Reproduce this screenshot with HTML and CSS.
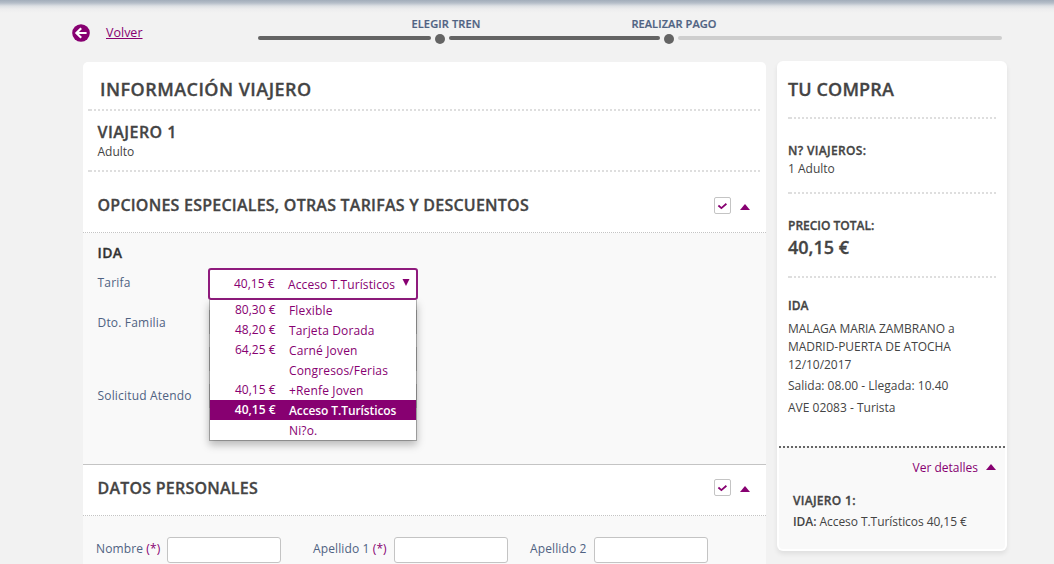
FILE: index.html
```html
<!DOCTYPE html>
<html lang="es">
<head>
<meta charset="utf-8">
<title>Información viajero</title>
<link rel="stylesheet" href="styles.css">
</head>
<body>
<header class="topbar">
  <a class="back" href="#">
    <svg width="18" height="18" viewBox="0 0 18 18"><circle cx="9" cy="9" r="8.8" fill="#870071"/><path d="M14.6 9H4.5M9.2 4.2L4.4 9l4.8 4.8" fill="none" stroke="#fff" stroke-width="2.2"/></svg>
    <span class="back-text">Volver</span>
  </a>
  <div class="steps">
    <span class="bar bar-first"></span>
    <span class="dot"><span class="step-label t-elegir">ELEGIR TREN</span></span>
    <span class="bar bar-second"></span>
    <span class="dot"><span class="step-label t-pago">REALIZAR PAGO</span></span>
    <span class="bar bar-pending"></span>
  </div>
</header>
<div class="columns">
  <main class="card">
    <h1 class="card-title">INFORMACIÓN VIAJERO</h1>
    <div class="dots inset"></div>
    <div class="traveller">
      <h2 class="traveller-name">VIAJERO 1</h2>
      <p class="traveller-type">Adulto</p>
    </div>
    <div class="dots inset"></div>
    <div class="section-head options-head">
      <h2 class="section-title">OPCIONES ESPECIALES, OTRAS TARIFAS Y DESCUENTOS</h2>
      <span class="check"><svg width="17" height="17" viewBox="0 0 17 17"><path d="M4.4 8.5l3 2.6 5-4.4" fill="none" stroke="#870071" stroke-width="1.8"/></svg></span>
      <svg class="caret" width="10" height="6" viewBox="0 0 10 6"><path d="M5 0l5 6H0z" fill="#870071"/></svg>
    </div>
    <section class="options">
      <h3 class="trip">IDA</h3>
      <div class="row row-fare">
        <span class="label">Tarifa</span>
        <div class="select">
          <span class="price">40,15 €</span><span class="fare">Acceso T.Turísticos</span>
          <svg class="arrow" width="8" height="7" viewBox="0 0 8 7"><path d="M0.5 0h7L4 7z" fill="#870071"/></svg>
          <ul class="menu">
            <li><span class="price">80,30 €</span><span class="fare">Flexible</span></li>
            <li><span class="price">48,20 €</span><span class="fare">Tarjeta Dorada</span></li>
            <li><span class="price">64,25 €</span><span class="fare">Carné Joven</span></li>
            <li><span class="price"></span><span class="fare">Congresos/Ferias</span></li>
            <li><span class="price">40,15 €</span><span class="fare">+Renfe Joven</span></li>
            <li class="selected"><span class="price">40,15 €</span><span class="fare">Acceso T.Turísticos</span></li>
            <li><span class="price"></span><span class="fare">Ni?o.</span></li>
          </ul>
        </div>
      </div>
      <div class="row row-family"><span class="label">Dto. Familia</span><span class="field"></span></div>
      <div class="row row-extra"><span class="label"></span><span class="field"></span></div>
      <div class="row row-atendo"><span class="label">Solicitud Atendo</span><span class="field"></span></div>
    </section>
    <div class="section-head personal-head">
      <h2 class="section-title">DATOS PERSONALES</h2>
      <span class="check"><svg width="17" height="17" viewBox="0 0 17 17"><path d="M4.4 8.5l3 2.6 5-4.4" fill="none" stroke="#870071" stroke-width="1.8"/></svg></span>
      <svg class="caret" width="10" height="6" viewBox="0 0 10 6"><path d="M5 0l5 6H0z" fill="#870071"/></svg>
    </div>
    <form class="personal">
      <label class="name-label first">Nombre <b>(*)</b></label><input class="text" type="text">
      <label class="name-label second">Apellido 1 <b>(*)</b></label><input class="text" type="text">
      <label class="name-label third">Apellido 2</label><input class="text" type="text">
    </form>
  </main>
  <aside class="cart">
    <div class="cart-body">
      <h2 class="cart-title">TU COMPRA</h2>
      <div class="dots"></div>
      <div class="block travellers"><h3>N? VIAJEROS:</h3><p>1 Adulto</p></div>
      <div class="dots"></div>
      <div class="block total"><h3>PRECIO TOTAL:</h3><p class="amount">40,15 €</p></div>
      <div class="dots"></div>
      <div class="block journey">
        <h3>IDA</h3>
        <p class="route">MALAGA MARIA ZAMBRANO a<br>MADRID-PUERTA DE ATOCHA<br>12/10/2017</p>
        <p class="times">Salida: 08.00 - Llegada: 10.40</p>
        <p class="train">AVE 02083 - Turista</p>
      </div>
    </div>
    <div class="details">
      <div class="dots dark"></div>
      <a class="toggle" href="#"><span>Ver detalles</span><svg width="10" height="6" viewBox="0 0 10 6"><path d="M5 0l5 6H0z" fill="#870071"/></svg></a>
      <h3 class="detail-title">VIAJERO 1:</h3>
      <p class="detail-line"><b>IDA:</b> Acceso T.Turísticos 40,15 €</p>
    </div>
  </aside>
</div>
</body>
</html>
```

FILE: styles.css
```css
* { box-sizing: border-box; margin: 0; padding: 0; }
body {
  width: 1054px;
  height: 564px;
  overflow: hidden;
  background: #f2f2f2 linear-gradient(#a2adba 0, #b6bec9 3px, #dde0e4 6px, #ededee 9px, #f2f2f2 13px) no-repeat;
  font: 12px/18px "Open Sans", sans-serif;
  color: #444;
}
h1, h2, h3 { font-weight: 600; white-space: nowrap; -webkit-text-stroke: .3px currentColor; }
p, span, label { white-space: nowrap; }
.topbar { display: flex; height: 61px; padding-left: 72px; }
.back { display: flex; gap: 16px; width: 186px; padding-top: 24px; color: #870071; text-decoration: none; }
.back-text { font-size: 12.5px; line-height: 18px; text-decoration: underline; }
.steps { display: flex; gap: 4px; padding-top: 34px; }
.bar { height: 4px; margin-top: 2px; border-radius: 2px; background: #646464; }
.bar-first { width: 173px; }
.bar-second { width: 211px; }
.bar-pending { width: 324px; background: #cecece; }
.dot { position: relative; width: 10px; height: 10px; border-radius: 5px; background: #646464; }
.step-label { position: absolute; bottom: 12px; left: 50%; transform: translateX(-50%); font-size: 11px; line-height: 16px; font-weight: 600; color: #4f6282; -webkit-text-stroke: .2px currentColor; }
.t-elegir { margin-left: 6px; letter-spacing: .15px; }
.t-pago { margin-left: 5px; letter-spacing: .1px; }

.columns { display: flex; align-items: flex-start; gap: 11px; padding-left: 83px; }
.card { width: 683px; height: 503px; margin-top: 1px; overflow: hidden; border-radius: 5px 5px 0 0; background: #fff; }
.dots { height: 2px; background: linear-gradient(#dedede, #dedede) 0 0 / 2px 2px no-repeat, repeating-linear-gradient(90deg, transparent 0 2px, #dedede 2px 4px); }
.inset { margin: 0 5px; }
.card-title { height: 47px; padding: 15px 0 0 17px; font-size: 18px; line-height: 25px; letter-spacing: .46px; }
.traveller { height: 59px; padding: 11px 0 0 14.5px; }
.traveller-name { font-size: 16px; line-height: 20px; letter-spacing: .45px; }
.traveller-type { padding-top: 1px; line-height: 18px; }
.section-head { display: flex; align-items: center; padding: 0 16px 0 14.5px; }
.options-head { height: 61px; padding-top: 10px; border-bottom: 1px dotted #c4c4c4; }
.personal-head { height: 52px; border-top: 1px solid #c4c4c4; border-bottom: 1px dotted #c4c4c4; }
.section-title { flex: 1; font-size: 16px; line-height: 22px; padding-bottom: 4px; letter-spacing: .23px; }
.check { width: 17px; height: 17px; margin-right: 9px; border: 1px solid #c4c4c4; border-radius: 2px; background: #fff; }
.check svg { display: block; margin: -1px; }
.options-head .check { margin-bottom: 3px; }
.personal-head .check { margin-bottom: 5px; }
.personal-head .caret { margin-bottom: 2px; }

.options { height: 231px; padding-left: 14.5px; background: #f9f9f9; }
.trip { height: 35px; padding-top: 11px; font-size: 14px; line-height: 18px; color: #333; letter-spacing: .4px; }
.row { display: flex; align-items: center; color: #4f6282; }
.label { width: 111.5px; padding-right: 4px; font-size: 12px; letter-spacing: .18px; }
.row-fare { height: 31px; }
.row-fare .label { padding-bottom: 1px; }
.row-family { height: 24px; margin-top: 11px; }
.row-family .label { padding-top: 2px; }
.row-extra { height: 24px; margin-top: 13px; }
.row-atendo { height: 24px; margin-top: 13px; }
.field { width: 208px; height: 24px; border: 1px solid #d0d0d0; }
.select { position: relative; display: flex; align-items: center; width: 210px; height: 32px; margin-left: -1px; border: 2px solid #8f1b7d; border-radius: 3px; background: #fff; color: #870071; }
.price { width: 65px; height: 18px; text-align: right; }
.select > .price { width: 64.5px; }
.select > .fare { margin-left: 13.5px; padding-top: 2px; letter-spacing: .1px; }
.fare { margin-left: 14px; padding-top: 1px; font-size: 12px; letter-spacing: .15px; }
.arrow { margin: -3px 0 0 7px; }
.menu { position: absolute; z-index: 2; top: 30px; left: -1px; width: 208px; border: 1px solid rgba(0,0,0,.27); border-top-width: 0; background: #fff; background-clip: padding-box; list-style: none; box-shadow: 0 4px 8px rgba(0,0,0,.26); }
.menu li { display: flex; height: 20px; padding-top: 1px; }
.menu .price { width: 65.5px; }
.menu .fare { margin-left: 13.5px; }
.selected { background: #870071; color: #fff; font-weight: 600; }
.selected .fare { letter-spacing: -.1px; }

.personal { display: flex; height: 48px; padding: 21px 0 0 13px; background: #f9f9f9; color: #4f6282; }
.name-label { padding-top: 3px; font-size: 12px; letter-spacing: .12px; }
.name-label b { font-weight: 400; color: #870071; }
.first { width: 71px; }
.second { width: 81px; margin-left: 32px; }
.third { width: 64px; margin-left: 22px; }
.text { width: 114px; height: 26px; border: 1px solid #c4c4c4; border-radius: 3px; background: #fff; }

.cart { width: 230px; height: 490px; border-radius: 6px; background: #fff; box-shadow: 0 3px 5px rgba(0,0,0,.08); }
.cart-body { height: 385px; padding: 0 11px; }
.cart-title { height: 56px; padding-top: 16px; font-size: 18px; line-height: 25px; letter-spacing: .12px; }
.block h3 { font-size: 12px; line-height: 18px; }
.travellers { height: 73px; padding-top: 23px; }
.travellers h3 { letter-spacing: .33px; }
.total { height: 82px; padding-top: 23px; }
.amount { font-size: 18px; line-height: 25px; font-weight: 600; -webkit-text-stroke: .3px currentColor; }
.journey { padding-top: 19px; }
.route { padding-top: 5px; letter-spacing: -.04px; }
.times { padding-top: 3px; }
.train { padding-top: 4px; }
.cart-body .dots { width: 208px; }
.details { height: 103px; margin: 0 2px; border-radius: 0 0 4px 4px; background: #f9f9f9; }
.dark { background: repeating-linear-gradient(90deg, #666 0 2px, transparent 2px 4px); }
.toggle { display: flex; align-items: center; justify-content: flex-end; gap: 8px; height: 39px; padding-right: 9px; color: #870071; text-decoration: none; }
.toggle svg { margin-bottom: 2px; }
.detail-title { padding: 5px 0 0 14px; font-size: 12px; line-height: 18px; letter-spacing: .3px; }
.detail-line { padding: 3px 0 0 14px; letter-spacing: -.06px; }
.detail-line b { font-weight: 600; }
```
